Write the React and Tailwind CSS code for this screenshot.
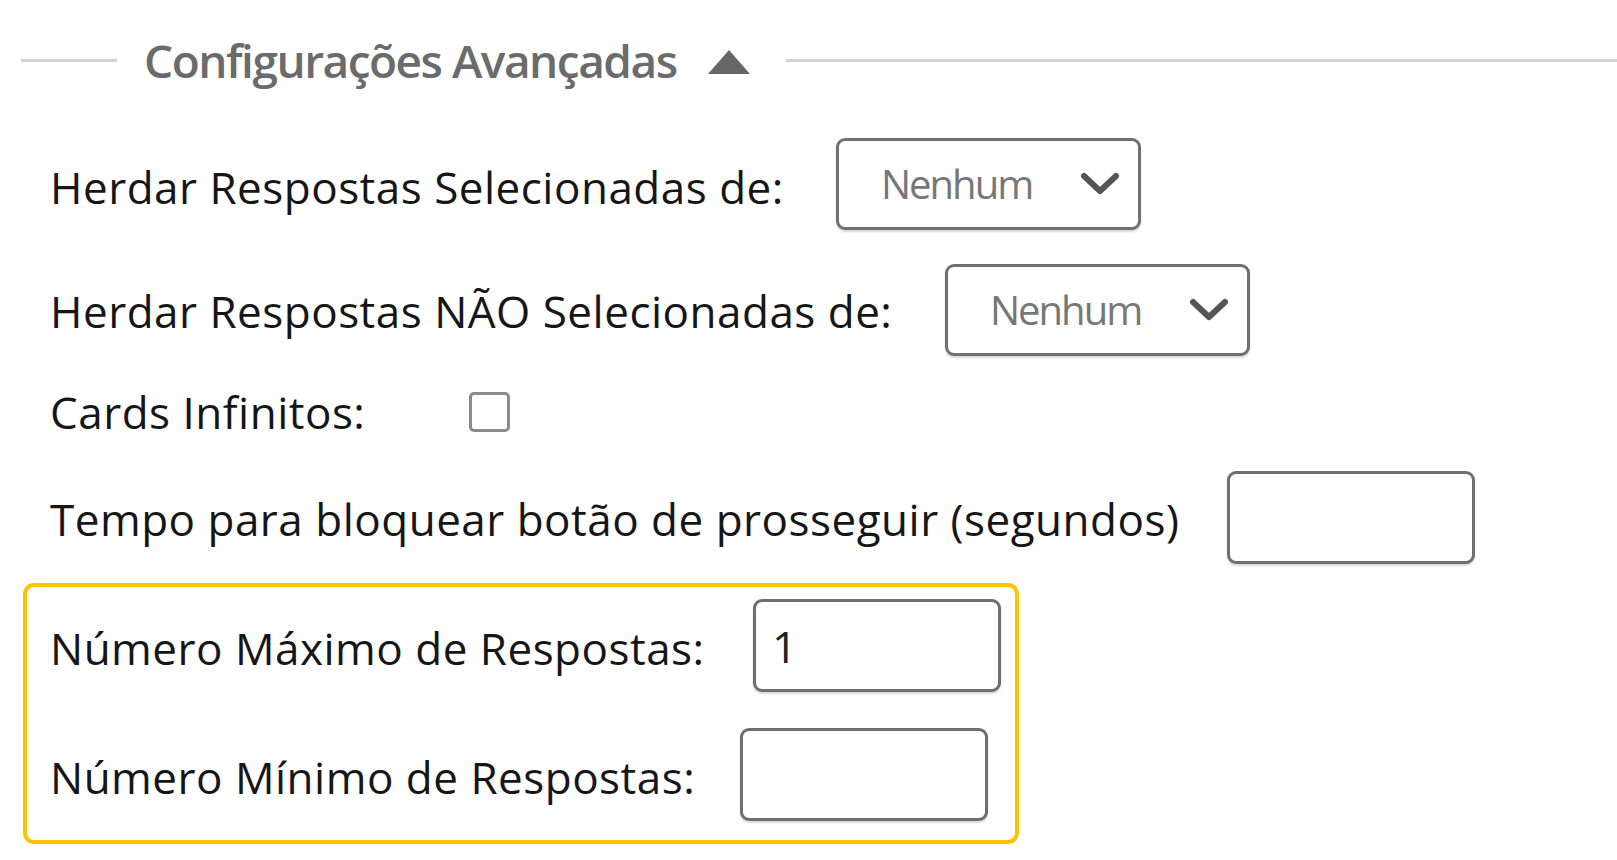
import React from "react";

function Chevron() {
  return (
    <svg width="40" height="24" viewBox="0 0 40 24" className="shrink-0">
      <path d="M4 4 L20 19 L36 4" fill="none" stroke="#555" strokeWidth="6" strokeLinecap="round" strokeLinejoin="round" />
    </svg>
  );
}

function Select() {
  return (
    <div className="flex h-[92px] w-[305px] items-center justify-between rounded-[9px] border-[3px] border-[#707070] bg-white pl-[42px] pr-[18px] shadow-[0_2px_2px_rgba(0,0,0,0.15)]">
      <span className="text-[40px] tracking-[-2px] text-[#777]">Nenhum</span>
      <Chevron />
    </div>
  );
}

function Input({ value }) {
  return (
    <div className="flex h-[93px] w-[248px] items-center rounded-[9px] border-[3px] border-[#6e6e6e] bg-white pl-[16px] shadow-[0_2px_2px_rgba(0,0,0,0.15)]">
      <span className="text-[44px] text-[#222]">{value}</span>
    </div>
  );
}

export default function App() {
  const font = { fontFamily: '"Open Sans", "Noto Sans", sans-serif' };
  return (
    <div className="min-h-[860px] w-[1617px] bg-white text-[#161616]" style={font}>
      {/* legend */}
      <div className="flex h-[120px] items-center">
        <div className="ml-[21px] h-[3px] w-[96px] bg-[#d2d2d2]" />
        <span className="ml-[27px] text-[46px] font-semibold tracking-[-1.5px] text-[#6b6b6b]">Configurações Avançadas</span>
        <svg width="44" height="26" viewBox="0 0 44 26" className="ml-[30px] mt-[4px]">
          <polygon points="22,1 43,25 1,25" fill="#666" />
        </svg>
        <div className="ml-[35px] h-[3px] flex-1 bg-[#d2d2d2]" />
      </div>

      <div className="pl-[50px] text-[44px] tracking-[0.5px]">
        <div className="mt-[18px] flex h-[92px] items-center">
          <span className="w-[786px] shrink-0 pt-[6px]">Herdar Respostas Selecionadas de:</span>
          <Select />
        </div>
        <div className="mt-[34px] flex h-[92px] items-center">
          <span className="w-[895px] shrink-0 pt-[2px]">Herdar Respostas NÃO Selecionadas de:</span>
          <Select />
        </div>
        <div className="mt-[36px] flex h-[40px] items-center">
          <span className="w-[419px] shrink-0">Cards Infinitos:</span>
          <div className="h-[40px] w-[41px] rounded-[5px] border-[3px] border-[#8a8a8a] bg-white" />
        </div>
        <div className="mt-[39px] flex h-[92px] items-center">
          <span className="w-[1177px] shrink-0 pt-[4px]">Tempo para bloquear botão de prosseguir (segundos)</span>
          <Input value="" />
        </div>
      </div>

      <div className="ml-[23px] mt-[20px] w-[996px] rounded-[11px] border-[4px] border-[#ffc400] pb-[19px] pl-[23px] pt-[12px] text-[44px] tracking-[0.5px]">
        <div className="flex h-[93px] items-center">
          <span className="w-[703px] shrink-0 pt-[4px]">Número Máximo de Respostas:</span>
          <Input value="1" />
        </div>
        <div className="mt-[36px] flex h-[93px] items-center">
          <span className="w-[690px] shrink-0 pt-[4px]">Número Mínimo de Respostas:</span>
          <Input value="" />
        </div>
      </div>
    </div>
  );
}
